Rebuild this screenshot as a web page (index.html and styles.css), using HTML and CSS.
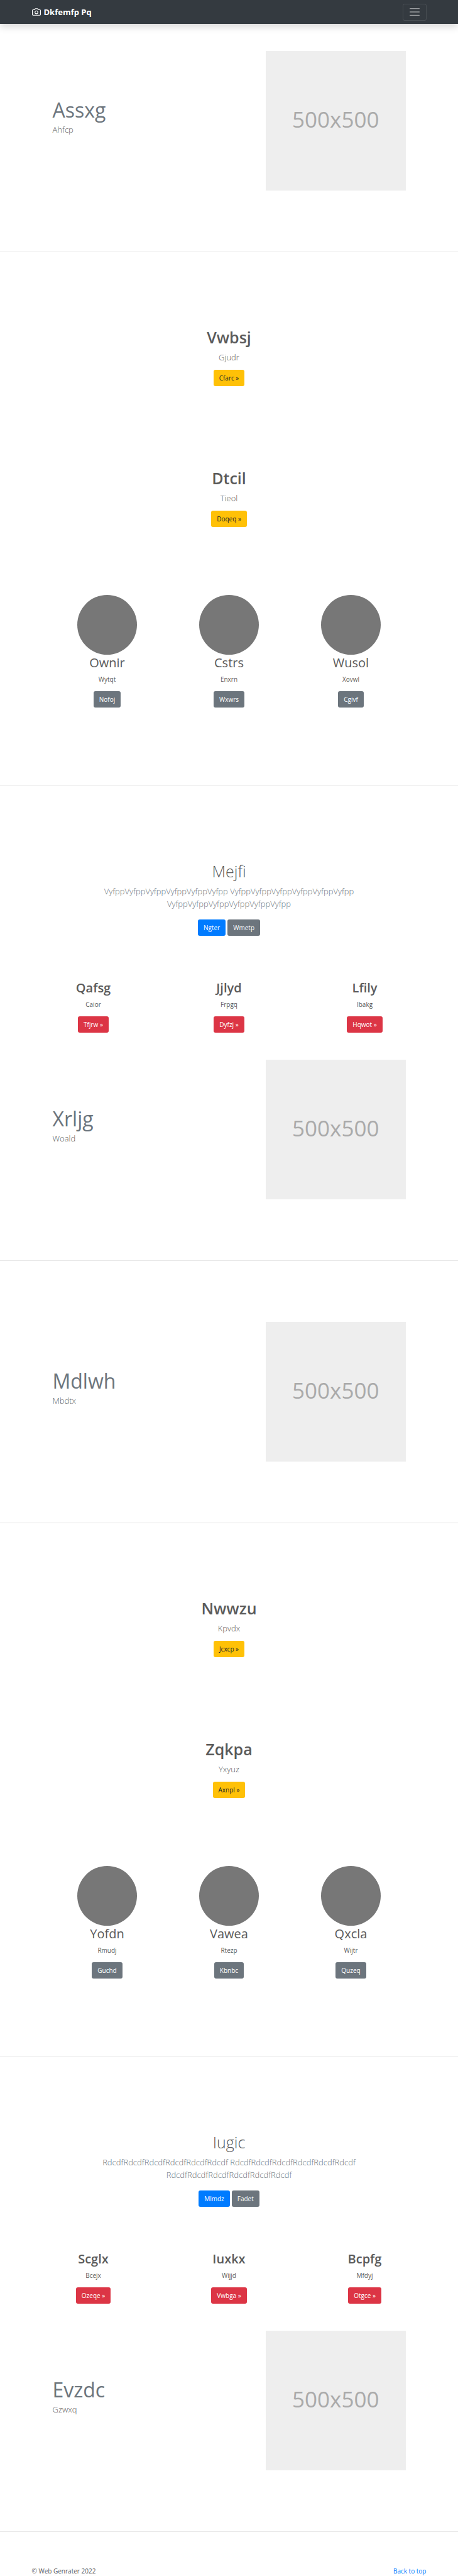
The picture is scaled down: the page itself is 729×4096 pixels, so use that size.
FILE: index.html
```html
<!DOCTYPE html>
<html lang="en">
<head>
<meta charset="utf-8">
<title>Dkfemfp Pq</title>
<link rel="stylesheet" href="styles.css">
</head>
<body>
<header class="navbar">
  <div class="container navbar-row">
    <a class="brand" href="#">
      <svg class="brand-icon" viewBox="0 0 24 24" fill="none" stroke="currentColor" stroke-width="2" stroke-linecap="round" stroke-linejoin="round" aria-hidden="true"><path d="M23 19a2 2 0 0 1-2 2H3a2 2 0 0 1-2-2V8a2 2 0 0 1 2-2h4l2-3h6l2 3h4a2 2 0 0 1 2 2z"/><circle cx="12" cy="13" r="4"/></svg>
      <strong>Dkfemfp Pq</strong>
    </a>
    <button class="toggler" type="button" aria-label="Toggle navigation">
      <svg class="toggler-icon" viewBox="0 0 30 30" fill="none" stroke="currentColor" stroke-width="2" stroke-linecap="round" stroke-miterlimit="10" aria-hidden="true"><path d="M4 7h22M4 15h22M4 23h22"/></svg>
    </button>
  </div>
</header>
<main>
  <section class="featurette featurette-first">
    <div class="featurette-text"><h2 class="featurette-title">Assxg</h2><p class="lead">Ahfcp</p></div>
    <div class="featurette-media"><div class="placeholder">500x500</div></div>
  </section>
  <hr class="divider">

  <section class="hero"><h1 class="title">Vwbsj</h1><p class="lead">Gjudr</p><a class="btn btn-warning" href="#">Cfarc »</a></section>
  <section class="hero hero-next"><h1 class="title">Dtcil</h1><p class="lead">Tieol</p><a class="btn btn-warning" href="#">Doqeq »</a></section>
  <section class="circles">
    <div class="cell"><div class="circle"></div><h2 class="subtitle">Ownir</h2><p class="text">Wytqt</p><a class="btn btn-secondary" href="#">Nofoj</a></div>
    <div class="cell"><div class="circle"></div><h2 class="subtitle">Cstrs</h2><p class="text">Enxrn</p><a class="btn btn-secondary" href="#">Wxwrs</a></div>
    <div class="cell"><div class="circle"></div><h2 class="subtitle">Wusol</h2><p class="text">Xovwl</p><a class="btn btn-secondary" href="#">Cgivf</a></div>
  </section>
  <hr class="divider">

  <section class="album">
    <h1 class="title title-light">Mejfi</h1>
    <p class="lead lead-muted">VyfppVyfppVyfppVyfppVyfppVyfpp VyfppVyfppVyfppVyfppVyfppVyfpp VyfppVyfppVyfppVyfppVyfppVyfpp</p>
    <div class="actions"><a class="btn btn-primary" href="#">Ngter</a><a class="btn btn-secondary" href="#">Wmetp</a></div>
  </section>
  <section class="container columns">
    <div class="cell"><h2 class="subtitle subtitle-strong">Qafsg</h2><p class="text">Caior</p><a class="btn btn-danger" href="#">Tfjrw »</a></div>
    <div class="cell"><h2 class="subtitle subtitle-strong">Jjlyd</h2><p class="text">Frpgq</p><a class="btn btn-danger" href="#">Dyfzj »</a></div>
    <div class="cell"><h2 class="subtitle subtitle-strong">Lfily</h2><p class="text">Ibakg</p><a class="btn btn-danger" href="#">Hqwot »</a></div>
  </section>
  <section class="featurette featurette-close">
    <div class="featurette-text"><h2 class="featurette-title">Xrljg</h2><p class="lead">Woald</p></div>
    <div class="featurette-media"><div class="placeholder">500x500</div></div>
  </section>
  <hr class="divider">

  <section class="featurette">
    <div class="featurette-text"><h2 class="featurette-title">Mdlwh</h2><p class="lead">Mbdtx</p></div>
    <div class="featurette-media"><div class="placeholder">500x500</div></div>
  </section>
  <hr class="divider">

  <section class="hero"><h1 class="title">Nwwzu</h1><p class="lead">Kpvdx</p><a class="btn btn-warning" href="#">Jcxcp »</a></section>
  <section class="hero hero-next"><h1 class="title">Zqkpa</h1><p class="lead">Yxyuz</p><a class="btn btn-warning" href="#">Axnpl »</a></section>
  <section class="circles">
    <div class="cell"><div class="circle"></div><h2 class="subtitle">Yofdn</h2><p class="text">Rmudj</p><a class="btn btn-secondary" href="#">Guchd</a></div>
    <div class="cell"><div class="circle"></div><h2 class="subtitle">Vawea</h2><p class="text">Rtezp</p><a class="btn btn-secondary" href="#">Kbnbc</a></div>
    <div class="cell"><div class="circle"></div><h2 class="subtitle">Qxcla</h2><p class="text">Wijtr</p><a class="btn btn-secondary" href="#">Quzeq</a></div>
  </section>
  <hr class="divider">

  <section class="album">
    <h1 class="title title-light">Iugic</h1>
    <p class="lead lead-muted">RdcdfRdcdfRdcdfRdcdfRdcdfRdcdf RdcdfRdcdfRdcdfRdcdfRdcdfRdcdf RdcdfRdcdfRdcdfRdcdfRdcdfRdcdf</p>
    <div class="actions"><a class="btn btn-primary" href="#">Mlmdz</a><a class="btn btn-secondary" href="#">Fadet</a></div>
  </section>
  <section class="container columns">
    <div class="cell"><h2 class="subtitle subtitle-strong">Scglx</h2><p class="text">Bcejx</p><a class="btn btn-danger" href="#">Ozeqe »</a></div>
    <div class="cell"><h2 class="subtitle subtitle-strong">Iuxkx</h2><p class="text">Wijjd</p><a class="btn btn-danger" href="#">Vwbga »</a></div>
    <div class="cell"><h2 class="subtitle subtitle-strong">Bcpfg</h2><p class="text">Mfdyj</p><a class="btn btn-danger" href="#">Otgce »</a></div>
  </section>
  <section class="featurette featurette-close">
    <div class="featurette-text"><h2 class="featurette-title">Evzdc</h2><p class="lead">Gzwxq</p></div>
    <div class="featurette-media"><div class="placeholder">500x500</div></div>
  </section>
  <hr class="divider">
</main>
<footer class="container footer">
  <p class="text">© Web Genrater 2022</p>
  <a class="footer-link" href="#">Back to top</a>
</footer>
</body>
</html>
```
FILE: styles.css
```css
* { box-sizing: border-box; }

body {
  margin: 0;
  background: #fff;
  color: #5a5a5a;
  font-family: "Open Sans", "Noto Sans", sans-serif;
  font-size: 10px;
  line-height: 16px;
}

h1, h2, p { margin: 0; }

a { text-decoration: none; }

.container {
  max-width: 648px;
  margin: 0 auto;
}

/* Top bar */
.navbar {
  background: #343a40;
  box-shadow: 0 5px 11px rgba(0, 0, 0, .15);
}

.navbar-row {
  display: flex;
  align-items: center;
  justify-content: space-between;
  height: 38px;
  padding: 0 10px;
}

.brand {
  display: flex;
  align-items: center;
  gap: 5px;
  color: #fff;
  font-size: 13px;
  line-height: 20px;
}

.brand-icon { width: 14px; height: 14px; }

.toggler {
  display: flex;
  align-items: center;
  justify-content: center;
  width: 38px;
  height: 27px;
  padding: 0;
  border: 1px solid rgba(255, 255, 255, .1);
  border-radius: 3px;
  background: transparent;
  color: rgba(255, 255, 255, .5);
}

.toggler-icon { width: 20px; height: 20px; }

/* Shared text */
.title {
  font-size: 25px;
  font-weight: 600;
  line-height: 32px;
}

.title-light { font-weight: 300; }

.subtitle {
  font-size: 20px;
  font-weight: 400;
  line-height: 26px;
}

.subtitle-strong { font-weight: 600; }

.lead {
  font-size: 13px;
  font-weight: 300;
  line-height: 20px;
}

.lead-muted { color: #6c757d; }

.divider {
  height: 1px;
  margin: 97px 0 0;
  border: 0;
  background: #e5e5e5;
}

/* Buttons */
.btn {
  display: inline-block;
  padding: 5px 9px;
  border-radius: 3px;
  color: #fff;
}

.btn-warning { background: #ffc107; color: #212529; }
.btn-secondary { background: #6c757d; }
.btn-primary { background: #007bff; }
.btn-danger { background: #dc3545; }

/* Text beside a square picture */
.featurette {
  display: grid;
  grid-template-columns: 7fr 5fr;
  max-width: 582px;
  margin: 97px auto 0;
}

.featurette-first { margin-top: 43px; }
.featurette-close { margin-top: 43px; }

.featurette-text { padding: 74px 10px 0; }

.featurette-title {
  margin-bottom: 1px;
  color: #6c757d;
  font-size: 32px;
  font-weight: 400;
  line-height: 40px;
}

.featurette-media { padding: 0 10px; }

.placeholder {
  display: flex;
  align-items: center;
  justify-content: center;
  height: 222px;
  padding-bottom: 5px;
  background: #eee;
  color: #aaa;
  font-size: 35px;
  line-height: 40px;
}

/* Centred blocks */
.hero, .album, .cell {
  display: flex;
  flex-direction: column;
  align-items: center;
  text-align: center;
}

.hero { padding-top: 119px; }
.hero-next { padding-top: 130px; }
.hero .title, .album .title { margin-bottom: 6px; }
.hero .lead { margin-bottom: 10px; }

.circles {
  display: grid;
  grid-template-columns: repeat(3, 1fr);
  max-width: 582px;
  margin: 108px auto 124px;
}

.circles + .divider { margin-top: 0; }

.circle {
  width: 95px;
  height: 95px;
  border-radius: 50%;
  background: #777;
}

.cell .subtitle { margin-bottom: 5px; }
.cell .text { margin-bottom: 11px; }

.album {
  max-width: 430px;
  margin: 0 auto;
  padding-top: 119px;
}

.actions {
  display: flex;
  gap: 3px;
  margin-top: 15px;
}

.columns {
  display: grid;
  grid-template-columns: repeat(3, 1fr);
  margin-top: 70px;
}

/* Footer */
.footer {
  display: flex;
  justify-content: space-between;
  padding: 54px 10px 0;
}

.footer-link { color: #007bff; }
```
